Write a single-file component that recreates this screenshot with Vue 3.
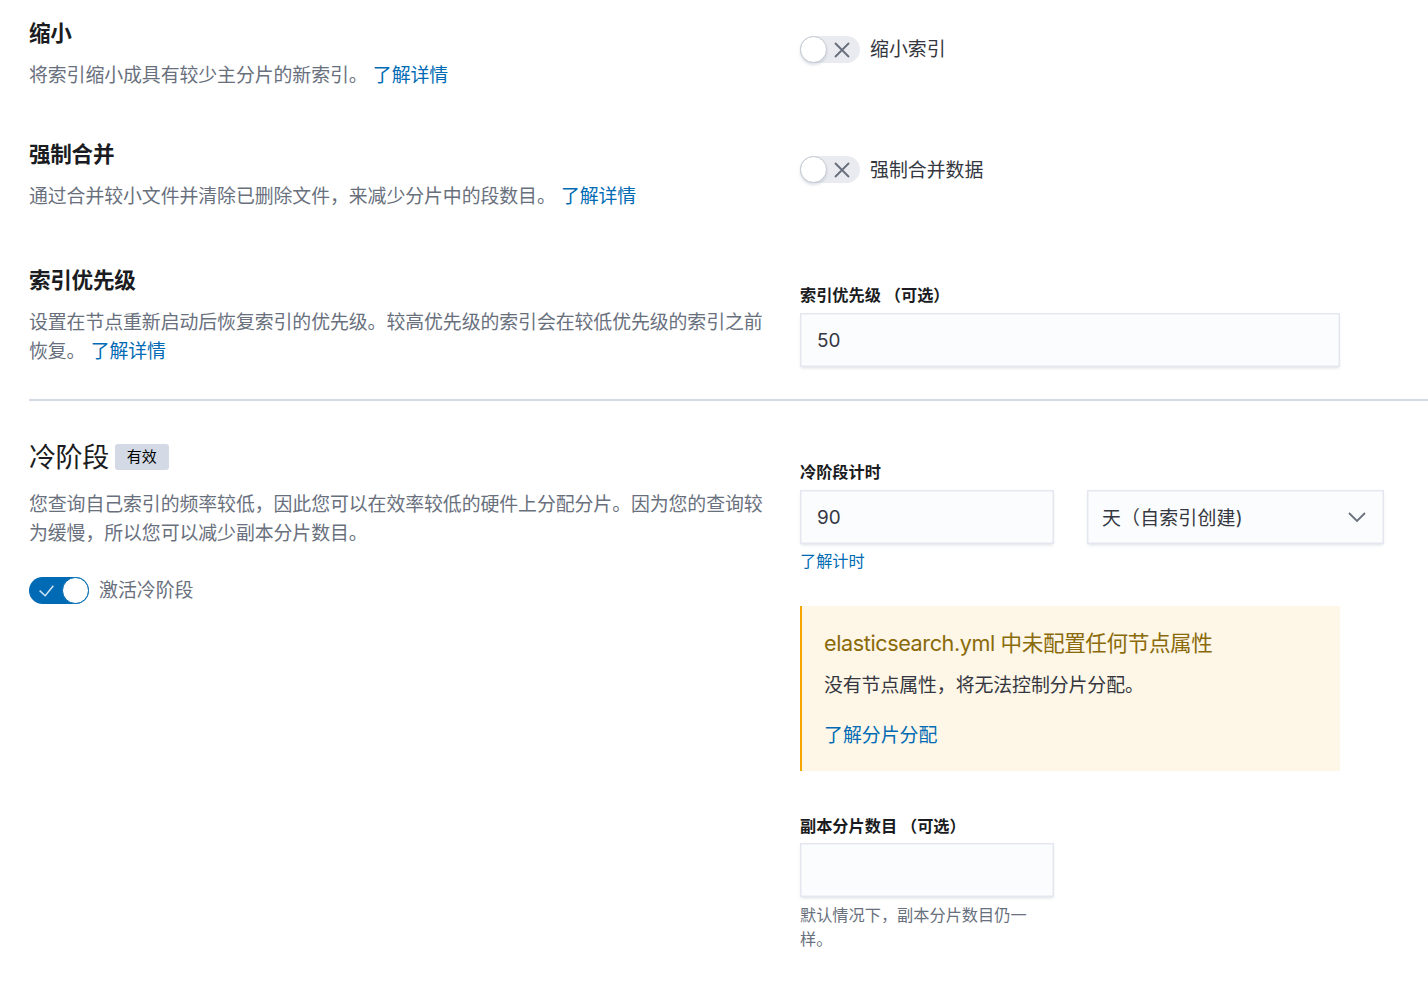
<template>
  <div class="page">
    <section class="row row-shrink">
      <div class="left">
        <h3 class="title">缩小</h3>
        <p class="desc">将索引缩小成具有较少主分片的新索引。 <a class="link">了解详情</a></p>
      </div>
      <div class="right toggle-right">
        <button class="switch" :class="{ on: shrink }" @click="shrink = !shrink">
          <svg v-if="!shrink" class="icon-x" viewBox="0 0 16 16"><path d="M1 1l14 14M15 1L1 15" /></svg>
          <svg v-else class="icon-check" viewBox="0 0 18 14"><path d="M1 6.5l6.5 6L17 1" /></svg>
          <span class="knob" />
        </button>
        <span class="switch-label">缩小索引</span>
      </div>
    </section>

    <section class="row row-merge">
      <div class="left">
        <h3 class="title">强制合并</h3>
        <p class="desc">通过合并较小文件并清除已删除文件，来减少分片中的段数目。 <a class="link">了解详情</a></p>
      </div>
      <div class="right toggle-right merge-right">
        <button class="switch" :class="{ on: merge }" @click="merge = !merge">
          <svg v-if="!merge" class="icon-x" viewBox="0 0 16 16"><path d="M1 1l14 14M15 1L1 15" /></svg>
          <svg v-else class="icon-check" viewBox="0 0 18 14"><path d="M1 6.5l6.5 6L17 1" /></svg>
          <span class="knob" />
        </button>
        <span class="switch-label">强制合并数据</span>
      </div>
    </section>

    <section class="row row-priority">
      <div class="left">
        <h3 class="title">索引优先级</h3>
        <p class="desc">设置在节点重新启动后恢复索引的优先级。较高优先级的索引会在较低优先级的索引之前恢复。 <a class="link">了解详情</a></p>
      </div>
      <div class="right priority-right">
        <label class="field-label">索引优先级 （可选）</label>
        <input v-model="priority" class="input wide" />
      </div>
    </section>

    <hr class="divider" />

    <section class="row row-cold">
      <div class="left">
        <div class="phase-head">
          <h2 class="phase-title">冷阶段</h2>
          <span class="badge">有效</span>
        </div>
        <p class="desc phase-desc">您查询自己索引的频率较低，因此您可以在效率较低的硬件上分配分片。因为您的查询较为缓慢，所以您可以减少副本分片数目。</p>
        <div class="phase-toggle">
          <button class="switch" :class="{ on: cold }" @click="cold = !cold">
            <svg v-if="!cold" class="icon-x" viewBox="0 0 16 16"><path d="M1 1l14 14M15 1L1 15" /></svg>
            <svg v-else class="icon-check" viewBox="0 0 18 14"><path d="M1 6.5l6.5 6L17 1" /></svg>
            <span class="knob" />
          </button>
          <span class="switch-label muted">激活冷阶段</span>
        </div>
      </div>

      <div class="right cold-right">
        <label class="field-label">冷阶段计时</label>
        <div class="timing">
          <input v-model="coldDays" class="input narrow" />
          <div class="select">
            <span class="select-text">天（自索引创建)</span>
            <svg class="chevron" viewBox="0 0 18 10"><path d="M1 1l8 8 8-8" /></svg>
          </div>
        </div>
        <a class="link small help-link">了解计时</a>

        <div class="callout">
          <div class="callout-title">elasticsearch.yml 中未配置任何节点属性</div>
          <p class="callout-text">没有节点属性，将无法控制分片分配。</p>
          <a class="link callout-link">了解分片分配</a>
        </div>

        <label class="field-label replicas-label">副本分片数目 （可选）</label>
        <input v-model="replicas" class="input narrow" />
        <p class="help">默认情况下，副本分片数目仍一样。</p>
      </div>
    </section>
  </div>
</template>

<script setup>
import { ref } from "vue";

const shrink = ref(false);
const merge = ref(false);
const cold = ref(true);
const priority = ref("50");
const coldDays = ref("90");
const replicas = ref("");
</script>

<style>
html,
body {
  background: #fff;
  overflow: hidden;
}
</style>

<style scoped>
.page {
  height: 982px;
  box-sizing: border-box;
  padding: 17px 0 0 29px;
  overflow: hidden;
  font-family: Inter, "Noto Sans CJK SC", sans-serif;
  color: #343741;
}

.row {
  display: flex;
}

.left {
  width: 739px;
  margin-right: 32px;
  flex-shrink: 0;
}

.right {
  flex: 1;
  min-width: 0;
}

.row-shrink {
  margin-bottom: 48px;
}

.row-merge {
  margin-bottom: 53px;
}

.title {
  margin: 0;
  font-size: 21.6px;
  line-height: 32px;
  font-weight: 700;
  letter-spacing: -0.3px;
  color: #1a1c21;
}

.desc {
  margin: 12px 0 0;
  font-size: 18.9px;
  line-height: 29px;
  letter-spacing: -0.08px;
  color: #69707d;
}

.link {
  color: #006bb4;
  cursor: pointer;
}

.toggle-right {
  display: flex;
  align-items: flex-start;
  gap: 10px;
  padding-top: 19px;
}

.merge-right {
  padding-top: 18px;
}

.merge-right .switch-label {
  margin-top: 1px;
}

.switch {
  position: relative;
  flex-shrink: 0;
  width: 60px;
  height: 27px;
  padding: 0;
  border: 0;
  border-radius: 14px;
  background: #e9ebf0;
  cursor: pointer;
}

.switch.on {
  background: #006bb4;
}

.knob {
  position: absolute;
  top: 0;
  left: 0;
  width: 27px;
  height: 27px;
  box-sizing: border-box;
  border: 1.5px solid #c3c8d1;
  border-radius: 50%;
  background: #fff;
  box-shadow: 0 2px 3px rgba(152, 162, 179, 0.35);
}

.switch.on .knob {
  left: 33px;
  border-color: #006bb4;
  box-shadow: none;
}

.icon-x {
  position: absolute;
  top: 6px;
  left: 34px;
  width: 16px;
  height: 16px;
  fill: none;
  stroke: #69707d;
  stroke-width: 1.9;
}

.icon-check {
  position: absolute;
  top: 8px;
  left: 9px;
  width: 17px;
  height: 12px;
  fill: none;
  stroke: #cfe3f1;
  stroke-width: 1.8;
}

.switch-label {
  font-size: 18.9px;
  line-height: 27px;
  color: #343741;
}

.switch-label.muted {
  color: #69707d;
}

.priority-right {
  padding-top: 19px;
}

.field-label {
  display: block;
  margin-bottom: 6px;
  font-size: 16.2px;
  line-height: 24px;
  font-weight: 700;
  color: #1a1c21;
}

.input {
  display: block;
  height: 54px;
  box-sizing: border-box;
  padding: 0 17px;
  border: 0;
  outline: 0;
  border-radius: 0;
  background: #fbfcfd;
  font-family: inherit;
  font-size: 18.9px;
  color: #343741;
  box-shadow: inset 0 0 0 1.5px #e4e7ef, 0 2px 3px -1px rgba(152, 162, 179, 0.35);
}

.input.wide {
  width: 540px;
}

.input.narrow {
  width: 254px;
}

.divider {
  height: 2px;
  margin: 32px 0 0;
  border: 0;
  background: #d3dae6;
}

.row-cold {
  padding-top: 38px;
}

.phase-head {
  display: flex;
  align-items: flex-start;
  gap: 6px;
}

.phase-title {
  margin: 1px 0 0;
  font-size: 27px;
  line-height: 36px;
  font-weight: 400;
  letter-spacing: -0.4px;
  color: #1a1c21;
}

.badge {
  margin-top: 5px;
  padding: 0 12px;
  border-radius: 3px;
  background: #d3dae6;
  font-size: 15px;
  line-height: 26px;
  color: #000;
}

.phase-desc {
  margin-top: 14px;
}

.phase-toggle {
  display: flex;
  align-items: center;
  gap: 10px;
  margin-top: 29px;
}

.cold-right {
  padding-top: 21px;
}

.timing {
  display: flex;
  gap: 33px;
}

.select {
  display: flex;
  align-items: center;
  justify-content: space-between;
  width: 297px;
  height: 54px;
  box-sizing: border-box;
  padding: 0 18px 0 15px;
  background: #fbfcfd;
  font-size: 18.9px;
  box-shadow: inset 0 0 0 1.5px #e4e7ef, 0 2px 3px -1px rgba(152, 162, 179, 0.35);
}

.select-text {
  margin-top: -2px;
  letter-spacing: 0.2px;
}

.chevron {
  width: 18px;
  height: 10px;
  fill: none;
  stroke: #69707d;
  stroke-width: 1.8;
}

.small {
  font-size: 16.2px;
  line-height: 24px;
}

.help-link {
  display: block;
  margin-top: 5px;
}

.callout {
  width: 540px;
  box-sizing: border-box;
  margin-top: 33px;
  padding: 21px 22px 21px 22px;
  border-left: 2px solid #f5a700;
  background: #fef6e6;
}

.callout-title {
  font-size: 21.6px;
  line-height: 32px;
  letter-spacing: -0.4px;
  color: #8a6a0a;
}

.callout-text {
  margin: 12px 0 0;
  font-size: 18.9px;
  line-height: 29px;
  letter-spacing: -0.08px;
}

.callout-link {
  display: block;
  margin-top: 21px;
  font-size: 18.9px;
  line-height: 29px;
}

.replicas-label {
  margin-top: 43px;
  margin-bottom: 5px;
}

.help {
  width: 254px;
  margin: 6px 0 0;
  font-size: 16.2px;
  line-height: 24px;
  color: #69707d;
}
</style>
